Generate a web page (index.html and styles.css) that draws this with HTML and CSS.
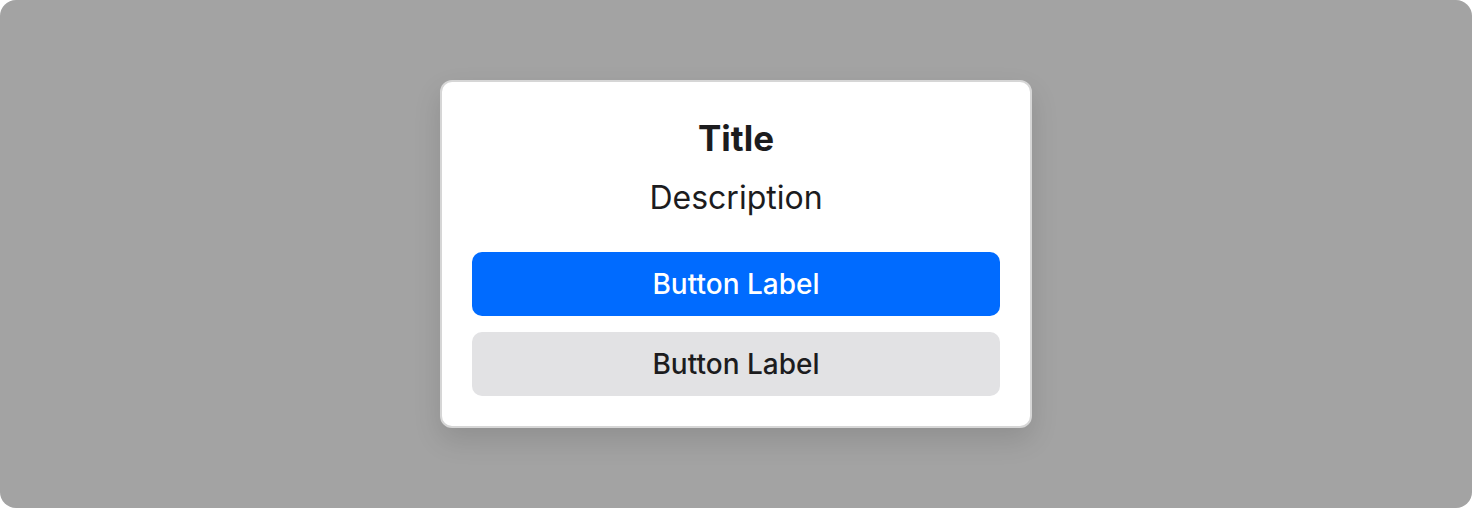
FILE: index.html
```html
<!DOCTYPE html>
<html lang="en">
<head>
<meta charset="utf-8">
<title>Dialog</title>
<link rel="stylesheet" href="styles.css">
</head>
<body>
  <main class="backdrop">
    <section class="dialog">
      <h1 class="dialog-title">Title</h1>
      <p class="dialog-desc">Description</p>
      <div class="dialog-actions">
        <button class="btn btn-primary">Button Label</button>
        <button class="btn btn-secondary">Button Label</button>
      </div>
    </section>
  </main>
</body>
</html>
```

FILE: styles.css
```css
html, body {
  margin: 0;
  padding: 0;
  background: #ffffff;
}

body {
  font-family: Inter, "Noto Sans", sans-serif;
  color: #1c1c1e;
}

.backdrop {
  width: 1472px;
  height: 508px;
  box-sizing: border-box;
  background: #a3a3a3;
  border-radius: 16px;
  display: flex;
  align-items: flex-start;
  justify-content: center;
  padding-top: 80px;
}

.dialog {
  width: 592px;
  box-sizing: border-box;
  background: #ffffff;
  border: 2px solid #d6d6d6;
  border-radius: 12px;
  padding: 30px;
  box-shadow: 0 12px 28px rgba(0, 0, 0, 0.12);
  display: flex;
  flex-direction: column;
  align-items: center;
}

.dialog-title {
  margin: 0;
  font-size: 35px;
  font-weight: 700;
  line-height: 52px;
}

.dialog-desc {
  margin: 14px 0 0;
  font-size: 32px;
  font-weight: 400;
  line-height: 40px;
}

.dialog-actions {
  align-self: stretch;
  display: flex;
  flex-direction: column;
  gap: 16px;
  margin-top: 34px;
}

.btn {
  height: 64px;
  border: none;
  border-radius: 10px;
  font-family: inherit;
  font-size: 28px;
  font-weight: 500;
  padding: 0;
}

.btn-primary {
  background: #006bff;
  color: #ffffff;
}

.btn-secondary {
  background: #e2e2e4;
  color: #1c1c1e;
}
```
